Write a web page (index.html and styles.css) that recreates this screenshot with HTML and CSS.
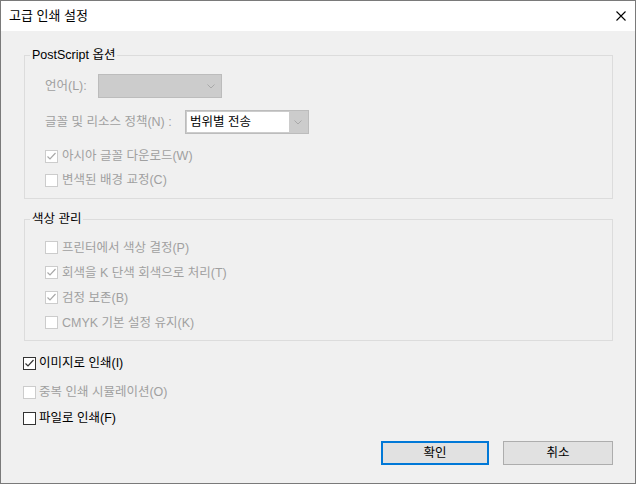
FILE: index.html
```html
<!DOCTYPE html>
<html>
<head>
    <title>고급 인쇄 설정</title>
    <link rel="stylesheet" href="styles.css">
</head>
<body>
    <div class="dialog">
        <div class="titlebar">
            <span class="title">고급 인쇄 설정</span>
            <svg class="close" width="10" height="10" viewBox="0 0 10 10">
                <path d="M0.5 0.5 L9.5 9.5 M9.5 0.5 L0.5 9.5" stroke="#000" stroke-width="1.1" fill="none"/>
            </svg>
        </div>

        <div class="content">
            <fieldset class="group group-ps">
                <legend>PostScript 옵션</legend>
                <div class="field-row row-lang">
                    <span class="field-label label-lang disabled">언어(L):</span>
                    <div class="combo">
                        <div class="combo-field empty"></div>
                        <div class="combo-arrow">
                            <svg width="8" height="5" viewBox="0 0 8 5"><path d="M0.5 0.5 L4 4 L7.5 0.5" stroke="#a9a9a9" fill="none"/></svg>
                        </div>
                    </div>
                </div>
                <div class="field-row row-policy">
                    <span class="field-label label-policy disabled">글꼴 및 리소스 정책(N) :</span>
                    <div class="combo">
                        <div class="combo-field">범위별 전송</div>
                        <div class="combo-arrow">
                            <svg width="8" height="5" viewBox="0 0 8 5"><path d="M0.5 0.5 L4 4 L7.5 0.5" stroke="#a9a9a9" fill="none"/></svg>
                        </div>
                    </div>
                </div>
                <div class="check disabled">
                    <span class="box"><svg width="11" height="11" viewBox="0 0 11 11"><path d="M1.5 5.5 L4 8 L9.5 2" stroke="#a8a8a8" stroke-width="1.2" fill="none"/></svg></span>
                    <span class="check-text">아시아 글꼴 다운로드(W)</span>
                </div>
                <div class="check disabled">
                    <span class="box"></span>
                    <span class="check-text">변색된 배경 교정(C)</span>
                </div>
            </fieldset>

            <fieldset class="group group-color">
                <legend>색상 관리</legend>
                <div class="check tall disabled">
                    <span class="box"></span>
                    <span class="check-text">프린터에서 색상 결정(P)</span>
                </div>
                <div class="check tall disabled">
                    <span class="box"><svg width="11" height="11" viewBox="0 0 11 11"><path d="M1.5 5.5 L4 8 L9.5 2" stroke="#a8a8a8" stroke-width="1.2" fill="none"/></svg></span>
                    <span class="check-text">회색을 K 단색 회색으로 처리(T)</span>
                </div>
                <div class="check tall disabled">
                    <span class="box"><svg width="11" height="11" viewBox="0 0 11 11"><path d="M1.5 5.5 L4 8 L9.5 2" stroke="#a8a8a8" stroke-width="1.2" fill="none"/></svg></span>
                    <span class="check-text">검정 보존(B)</span>
                </div>
                <div class="check tall disabled">
                    <span class="box"></span>
                    <span class="check-text">CMYK 기본 설정 유지(K)</span>
                </div>
            </fieldset>

            <div class="check outer check-image">
                <span class="box"><svg width="11" height="11" viewBox="0 0 11 11"><path d="M1.5 5.5 L4 8 L9.5 2" stroke="#333" stroke-width="1.2" fill="none"/></svg></span>
                <span class="check-text">이미지로 인쇄(I)</span>
            </div>
            <div class="check outer check-overprint disabled">
                <span class="box"></span>
                <span class="check-text">중복 인쇄 시뮬레이션(O)</span>
            </div>
            <div class="check outer check-file">
                <span class="box"></span>
                <span class="check-text">파일로 인쇄(F)</span>
            </div>

            <div class="buttons">
                <div class="button button-default">확인</div>
                <div class="button button-cancel">취소</div>
            </div>
        </div>
    </div>
</body>
</html>
```

FILE: styles.css
```css
body {
    margin: 0;
    font-family: "Liberation Sans", "Noto Sans CJK KR", sans-serif;
    font-size: 12.5px;
    line-height: 16px;
    color: #000;
    background-color: #f0f0f0;
}

.dialog {
    width: 636px;
    height: 484px;
    box-sizing: border-box;
    border: 1px solid #7a7a7a;
    background-color: #f0f0f0;
    overflow: hidden;
}

.titlebar {
    height: 30px;
    background-color: #fff;
    display: flex;
    align-items: center;
    justify-content: space-between;
    padding-left: 8px;
}

.title {
    font-size: 13px;
}

.close {
    margin-right: 9px;
}

.content {
    padding: 0 22px 0 22px;
}

.group {
    margin: 16px 0 0 1px;
    padding: 0 0 0 20px;
    border: 1px solid #dcdcdc;
    min-width: 0;
}

.group legend {
    padding: 0 2px;
    line-height: 16px;
    margin-left: -15px;
}

.group-ps {
    padding-top: 11px;
    padding-bottom: 6px;
}

.group-color {
    margin-top: 12px;
    padding-top: 8px;
    padding-bottom: 5px;
}

.field-row {
    display: flex;
    align-items: center;
    height: 24px;
}

.row-lang {
    margin-bottom: 12px;
}

.row-policy {
    margin-bottom: 10px;
}

.field-label {
    flex: none;
}

.label-lang {
    width: 53px;
}

.label-policy {
    width: 140px;
}

.disabled {
    color: #a0a0a0;
}

.combo {
    width: 124px;
    height: 24px;
    box-sizing: border-box;
    border: 1px solid #bcbcbc;
    background-color: #cccccc;
    padding: 1px;
    display: flex;
}

.combo-field {
    width: 102px;
    background-color: #fff;
    color: #000;
    padding-left: 3px;
    box-sizing: border-box;
    line-height: 20px;
}

.combo-field.empty {
    background-color: #cccccc;
}

.combo-arrow {
    flex: 1;
    display: flex;
    align-items: center;
    justify-content: center;
}

.check {
    display: flex;
    align-items: center;
    height: 24px;
}

.check.tall {
    height: 25px;
}

.box {
    width: 13px;
    height: 13px;
    box-sizing: border-box;
    border: 1px solid #333;
    background-color: #fff;
    display: flex;
    align-items: center;
    justify-content: center;
    flex: none;
}

.check.disabled .box {
    border-color: #cccccc;
}

.check-text {
    margin-left: 4px;
}

.check.outer .check-text {
    margin-left: 3px;
}

.check-image {
    margin-top: 10px;
}

.check-overprint {
    margin-top: 5px;
}

.check-file {
    margin-top: 2px;
}

.buttons {
    display: flex;
    justify-content: flex-end;
    margin-top: 11px;
}

.button {
    height: 24px;
    box-sizing: border-box;
    background-color: #e1e1e1;
    display: flex;
    align-items: center;
    justify-content: center;
}

.button-default {
    width: 108px;
    border: 2px solid #0078d7;
    margin-right: 14px;
}

.button-cancel {
    width: 110px;
    border: 1px solid #adadad;
}
```
